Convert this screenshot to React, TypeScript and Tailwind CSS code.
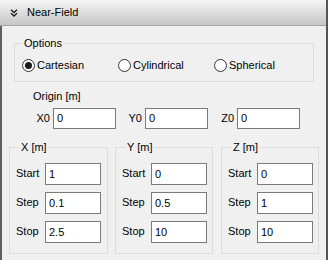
import React from "react";

function Radio({ label, checked }: { label: string; checked?: boolean }) {
  return (
    <div className="flex items-center gap-[2px]">
      <span className="flex h-[13px] w-[13px] items-center justify-center rounded-full border border-[#333333] bg-white">
        {checked && <span className="h-[7px] w-[7px] rounded-full bg-[#1a1a1a]" />}
      </span>
      <span>{label}</span>
    </div>
  );
}

function Field({ value, className }: { value: string; className: string }) {
  return (
    <input
      readOnly
      value={value}
      className={"border border-[#7a7a7a] bg-white px-[3px] text-[11px] text-black outline-none " + className}
    />
  );
}

function Range({ title, values, width }: { title: string; values: string[]; width: string }) {
  const rows = ["Start", "Step", "Stop"];
  return (
    <fieldset className={"h-[113px] border border-[#dcdcdc] " + width}>
      <legend className="ml-[9px] px-[2px] leading-[13px]">{title}</legend>
      <div className="mt-[9px] flex flex-col gap-[7px] pl-[6px]">
        {rows.map((r, i) => (
          <div key={r} className="flex items-center">
            <span className="w-[29px]">{r}</span>
            <Field value={values[i]} className="h-[22px] w-[56px]" />
          </div>
        ))}
      </div>
    </fieldset>
  );
}

export default function App() {
  return (
    <div className="flex h-[260px] w-[328px] flex-col border-r-2 border-[#555555] bg-[#f0f0f0] font-['Liberation_Sans',Arial,sans-serif] text-[11px] text-black">
      <div className="flex h-[26px] shrink-0 items-center border-b border-[#a3a3a3] bg-linear-to-b from-[#f5f5f5] to-[#c6c6c6]">
        <svg width="8" height="8" viewBox="0 0 8 8" className="ml-[10px]" fill="none" stroke="#222" strokeWidth="1.4">
          <path d="M1 0.8 L4 3.5 L7 0.8" />
          <path d="M1 4.3 L4 7 L7 4.3" />
        </svg>
        <span className="ml-[9px]">Near-Field</span>
      </div>

      <div className="flex-1 border-l-2 border-[#5f5f5f]">
        <fieldset className="ml-[12px] mt-[11px] w-[300px] border border-[#dcdcdc]">
          <legend className="ml-[7px] px-[2px] leading-[13px]">Options</legend>
          <div className="mt-[7px] mb-[7px] ml-[7px] grid grid-cols-[96px_96px_96px]">
            <Radio label="Cartesian" checked />
            <Radio label="Cylindrical" />
            <Radio label="Spherical" />
          </div>
        </fieldset>

        <div className="ml-[31px] mt-[8px] leading-[13px]">Origin [m]</div>

        <div className="ml-[29px] mt-[5px] grid grid-cols-[92px_92px_92px]">
          {[
            { l: "X0", v: "0" },
            { l: "Y0", v: "0" },
            { l: "Z0", v: "0" },
          ].map((o) => (
            <div key={o.l} className="flex items-center">
              <span className="mr-[3px] w-[19px] text-right">{o.l}</span>
              <Field value={o.v} className="h-[21px] w-[63px]" />
            </div>
          ))}
        </div>

        <div className="ml-[7px] mt-[12px] flex gap-[7px]">
          <Range title="X [m]" values={["1", "0.1", "2.5"]} width="w-[99px]" />
          <Range title="Y [m]" values={["0", "0.5", "10"]} width="w-[98px]" />
          <Range title="Z [m]" values={["0", "1", "10"]} width="w-[98px] ml-[1px]" />
        </div>
      </div>
    </div>
  );
}
